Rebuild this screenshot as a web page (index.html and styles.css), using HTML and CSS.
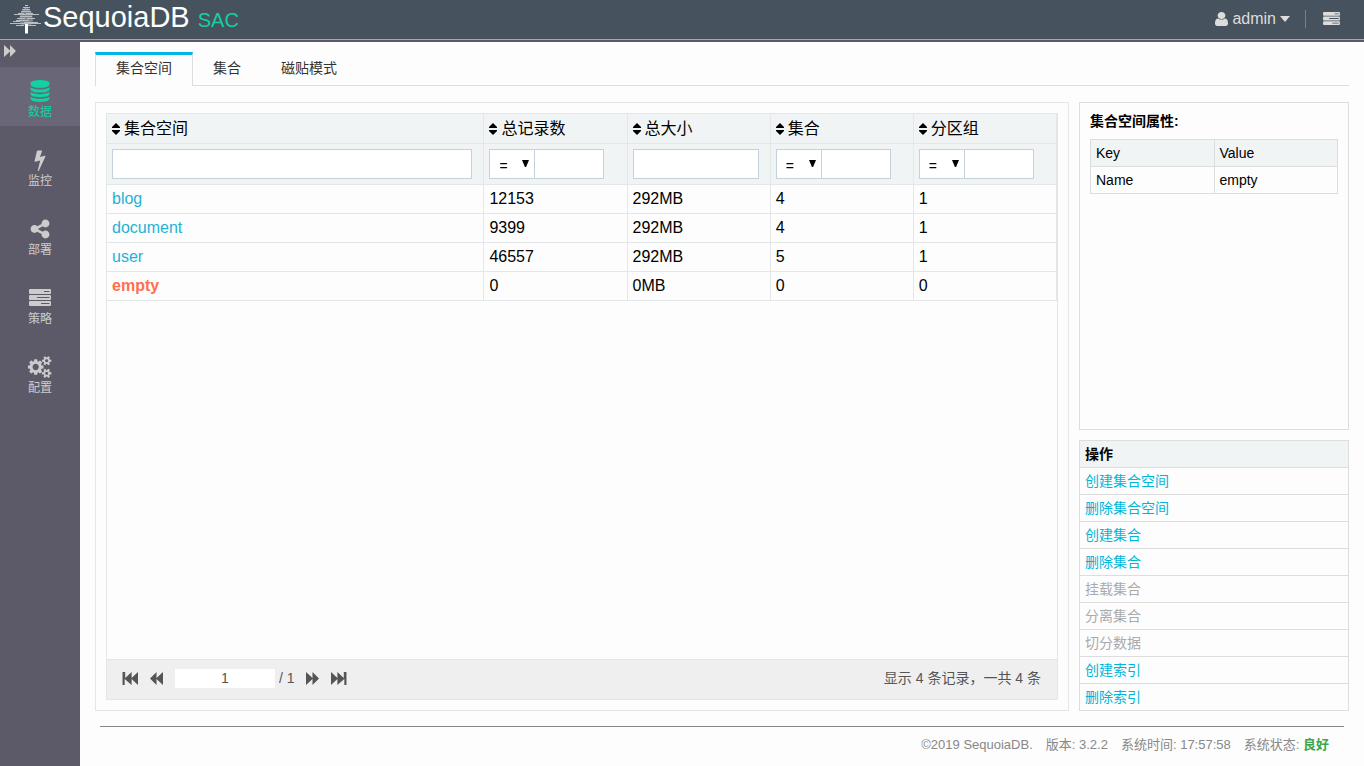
FILE: index.html
```html
<!DOCTYPE html>
<html lang="zh-CN">
<head>
<meta charset="utf-8">
<title>SequoiaDB SAC</title>
<link rel="stylesheet" href="styles.css">
</head>
<body>
<svg class="sprite" aria-hidden="true">
  <symbol id="i-forward" viewBox="0 0 12 12"><path d="M0 0L6 5.500V0L12 6L6 12V6.500L0 12z"/></symbol>
  <symbol id="i-end" viewBox="0 0 15 12"><path d="M0 0L6 5.500V0L12 5.500V0H14.500V12H12.500V6.500L6 12V6.500L0 12z"/></symbol>
  <symbol id="i-sort" viewBox="0 0 8 12"><path d="M4 0L8 4V5H0V4zM0 7H8V8L4 12L0 8z"/></symbol>
  <symbol id="i-tasks" viewBox="0 0 22 17"><path fill-rule="evenodd" d="M1 0H21Q22 0 22 1V4Q22 5 21 5H1Q0 5 0 4V1Q0 0 1 0zM15 2V3H20.500V2zM1 6H21Q22 6 22 7V10Q22 11 21 11H1Q0 11 0 10V7Q0 6 1 6zM8 8V9H20.500V8zM1 12H21Q22 12 22 13V16Q22 17 21 17H1Q0 17 0 16V13Q0 12 1 12zM12 14V15H20.500V14z"/></symbol>
</svg>

<header class="topbar">
  <div class="brand">
    <svg class="brand-tree" viewBox="0 0 32 30" aria-hidden="true">
      <path class="brand-core" d="M16 2L22 9L23 17L21 21H11L9 15L11 8z"/>
      <path d="M15 1.500h3M13 3.500h7M12 5.500h8M11 7.500h10M8 9.500h6M16 9.500h7M4 10.500h25M10 12.500h12M7 14.500h8M17 14.500h8M6 16.500h13M3 17.500h7M14 18.500h14M0 19.500h31M6 21.500h8M18 21.500h8"/>
      <path class="brand-trunk" d="M15 20h3v9.500h-3z"/>
    </svg>
    <span class="brand-name">SequoiaDB</span>
    <span class="brand-sub">SAC</span>
  </div>
  <div class="account">
    <button class="user-menu" type="button">
      <svg class="user-icon" viewBox="256 128 1280 1536" preserveAspectRatio="none" aria-hidden="true"><path d="M1536 1399q0 109-62.500 187t-150.500 78h-854q-88 0-150.500-78t-62.500-187q0-85 8.500-160.500t31.500-152 58.500-131 94-89 134.500-34.500q131 128 313 128t313-128q76 0 134.500 34.500t94 89 58.500 131 31.500 152 8.500 160.500zm-256-887q0 159-112.500 271.500t-271.500 112.500-271.500-112.500-112.500-271.500 112.500-271.500 271.500-112.500 271.500 112.500 112.500 271.500z"/></svg>
      <span>admin</span>
      <svg class="caret" viewBox="0 0 10 6" aria-hidden="true"><path d="M0 0H10L5 6z"/></svg>
    </button>
    <span class="divider"></span>
    <button class="task-button" type="button" aria-label="任务"><svg viewBox="0 0 22 17"><use href="#i-tasks"/></svg></button>
  </div>
</header>

<div class="shell">
  <nav class="sidebar">
    <button class="sidebar-toggle" type="button" aria-label="展开"><svg viewBox="0 0 12 12" aria-hidden="true"><use href="#i-forward"/></svg></button>
    <a class="nav-item nav-item--active" href="#">
      <svg class="nav-icon" viewBox="0 0 1536 1792" aria-hidden="true"><path d="M768 768q237 0 443-43t325-127v170q0 69-103 128t-280 93.500-385 34.500-385-34.500-280-93.500-103-128v-170q119 84 325 127t443 43zm0 768q237 0 443-43t325-127v170q0 69-103 128t-280 93.500-385 34.500-385-34.500-280-93.500-103-128v-170q119 84 325 127t443 43zm0-384q237 0 443-43t325-127v170q0 69-103 128t-280 93.500-385 34.500-385-34.500-280-93.500-103-128v-170q119 84 325 127t443 43zm0-1152q208 0 385 34.500t280 93.500 103 128v128q0 69-103 128t-280 93.500-385 34.500-385-34.500-280-93.500-103-128v-128q0-69 103-128t280-93.500 385-34.500z"/></svg>
      <span>数据</span>
    </a>
    <a class="nav-item" href="#">
      <svg class="nav-icon" viewBox="0 0 1792 1792" aria-hidden="true"><path d="M1333 566q18 20 7 44l-540 1157q-13 25-42 25-4 0-14-2-17-5-25.500-19t-4.500-30l197-808-406 101q-4 1-12 1-18 0-31-11-18-15-13-39l201-825q4-14 16-23t28-9h328q19 0 32 12.500t13 29.500q0 8-5 18l-171 463 396-98q8-2 12-2 19 0 34 15z"/></svg>
      <span>监控</span>
    </a>
    <a class="nav-item" href="#">
      <svg class="nav-icon" viewBox="128 0 1536 1792" aria-hidden="true"><path d="M1344 1024q133 0 226.500 93.500t93.500 226.500-93.500 226.500-226.500 93.500-226.500-93.500-93.500-226.500q0-12 2-34l-360-180q-92 86-218 86-133 0-226.500-93.500t-93.500-226.500 93.500-226.500 226.500-93.500q126 0 218 86l360-180q-2-22-2-34 0-133 93.500-226.500t226.500-93.500 226.500 93.500 93.500 226.500-93.500 226.500-226.500 93.500q-126 0-218-86l-360 180q2 22 2 34t-2 34l360 180q92-86 218-86z"/></svg>
      <span>部署</span>
    </a>
    <a class="nav-item" href="#">
      <svg class="nav-icon" viewBox="-1 -2 24 22" aria-hidden="true"><use href="#i-tasks" width="22" height="17"/></svg>
      <span>策略</span>
    </a>
    <a class="nav-item" href="#">
      <svg class="nav-icon" viewBox="0 0 1856 1792" aria-hidden="true"><path d="M832 896q0-106-75-181t-181-75-181 75-75 181 75 181 181 75 181-75 75-181zm768 512q0-52-38-90t-90-38-90 38-38 90q0 53 37.500 90.500t90.500 37.500 90.500-37.500 37.500-90.500zm0-1024q0-52-38-90t-90-38-90 38-38 90q0 53 37.500 90.500t90.500 37.500 90.500-37.500 37.500-90.500zm-384 421v185q0 10-7 19.500t-16 10.500l-155 24q-11 35-32 76 34 48 90 115 7 11 7 20 0 12-7 19-23 30-82.500 89.500t-78.500 59.500q-11 0-21-7l-115-90q-37 19-77 31-11 108-23 155-7 24-30 24h-186q-11 0-20-7.500t-10-17.500l-23-153q-34-10-75-31l-118 89q-7 7-20 7-11 0-21-8-144-133-144-160 0-9 7-19 10-14 41-53t47-61q-23-44-35-82l-152-24q-10-1-17-9.500t-7-19.500v-185q0-10 7-19.500t16-10.500l155-24q11-35 32-76-34-48-90-115-7-11-7-20 0-12 7-20 22-30 82-89t79-59q11 0 21 7l115 90q34-18 77-32 11-108 23-154 7-24 30-24h186q11 0 20 7.500t10 17.500l23 153q34 10 75 31l118-89q8-7 20-7 11 0 21 8 144 133 144 160 0 8-7 19-12 16-42 54t-45 60q23 48 34 82l152 23q10 2 17 10.500t7 19.500zm640 533v140q0 16-149 31-12 27-30 52 51 113 51 138 0 4-4 7-122 71-124 71-8 0-46-47t-52-68q-20 2-30 2t-30-2q-14 21-52 68t-46 47q-2 0-124-71-4-3-4-7 0-25 51-138-18-25-30-52-149-15-149-31v-140q0-16 149-31 13-29 30-52-51-113-51-138 0-4 4-7 4-2 35-20t59-34 30-16q8 0 46 46.500t52 67.500q20-2 30-2t30 2q51-71 92-112l6-2q4 0 124 70 4 3 4 7 0 25-51 138 17 23 30 52 149 15 149 31zm0-1024v140q0 16-149 31-12 27-30 52 51 113 51 138 0 4-4 7-122 71-124 71-8 0-46-47t-52-68q-20 2-30 2t-30-2q-14 21-52 68t-46 47q-2 0-124-71-4-3-4-7 0-25 51-138-18-25-30-52-149-15-149-31v-140q0-16 149-31 13-29 30-52-51-113-51-138 0-4 4-7 4-2 35-20t59-34 30-16q8 0 46 46.500t52 67.500q20-2 30-2t30 2q51-71 92-112l6-2q4 0 124 70 4 3 4 7 0 25-51 138 17 23 30 52 149 15 149 31z"/></svg>
      <span>配置</span>
    </a>
  </nav>

  <div class="page">
    <div class="tabs" role="tablist">
      <button class="tab tab--active" type="button" role="tab" aria-selected="true">集合空间</button>
      <button class="tab" type="button" role="tab">集合</button>
      <button class="tab" type="button" role="tab">磁贴模式</button>
    </div>

    <main class="content">
      <section class="panel panel--grid">
        <div class="grid">
          <table class="spaces">
            <colgroup><col><col class="col-stat"><col class="col-stat"><col class="col-stat"><col class="col-stat"></colgroup>
            <thead>
              <tr>
                <th><svg class="sort" viewBox="0 0 8 12"><use href="#i-sort"/></svg>集合空间</th>
                <th><svg class="sort" viewBox="0 0 8 12"><use href="#i-sort"/></svg>总记录数</th>
                <th><svg class="sort" viewBox="0 0 8 12"><use href="#i-sort"/></svg>总大小</th>
                <th><svg class="sort" viewBox="0 0 8 12"><use href="#i-sort"/></svg>集合</th>
                <th><svg class="sort" viewBox="0 0 8 12"><use href="#i-sort"/></svg>分区组</th>
              </tr>
              <tr class="filters">
                <td><input class="field" type="text" aria-label="集合空间"></td>
                <td><div class="compare"><span class="operator"><select aria-label="总记录数条件"><option>=</option></select><svg class="drop" viewBox="0 0 6 6"><path d="M0 0H6L3.500 6H2.500z"/></svg></span><input class="field" type="text" aria-label="总记录数"></div></td>
                <td><input class="field" type="text" aria-label="总大小"></td>
                <td><div class="compare"><span class="operator"><select aria-label="集合条件"><option>=</option></select><svg class="drop" viewBox="0 0 6 6"><path d="M0 0H6L3.500 6H2.500z"/></svg></span><input class="field" type="text" aria-label="集合"></div></td>
                <td><div class="compare"><span class="operator"><select aria-label="分区组条件"><option>=</option></select><svg class="drop" viewBox="0 0 6 6"><path d="M0 0H6L3.500 6H2.500z"/></svg></span><input class="field" type="text" aria-label="分区组"></div></td>
              </tr>
            </thead>
            <tbody>
              <tr><td><a href="#">blog</a></td><td>12153</td><td>292MB</td><td>4</td><td>1</td></tr>
              <tr><td><a href="#">document</a></td><td>9399</td><td>292MB</td><td>4</td><td>1</td></tr>
              <tr><td><a href="#">user</a></td><td>46557</td><td>292MB</td><td>5</td><td>1</td></tr>
              <tr><td><a class="selected" href="#">empty</a></td><td>0</td><td>0MB</td><td>0</td><td>0</td></tr>
            </tbody>
          </table>
          <div class="pager">
            <button type="button" aria-label="首页"><svg class="flip icon-end" viewBox="0 0 15 12"><use href="#i-end"/></svg></button>
            <button type="button" aria-label="上一页"><svg class="flip icon-step" viewBox="0 0 12 12"><use href="#i-forward"/></svg></button>
            <span class="pager-page"><input type="text" value="1" aria-label="页码"> / 1</span>
            <button type="button" aria-label="下一页"><svg class="icon-step" viewBox="0 0 12 12"><use href="#i-forward"/></svg></button>
            <button type="button" aria-label="末页"><svg class="icon-end" viewBox="0 0 15 12"><use href="#i-end"/></svg></button>
            <span class="pager-total">显示 4 条记录，一共 4 条</span>
          </div>
        </div>
      </section>

      <aside class="side">
        <section class="panel panel--props">
          <h2 class="props-title">集合空间属性:</h2>
          <table class="props">
            <thead><tr><th>Key</th><th>Value</th></tr></thead>
            <tbody><tr><td>Name</td><td>empty</td></tr></tbody>
          </table>
        </section>
        <section class="panel actions">
          <h2 class="actions-title">操作</h2>
          <ul class="action-list">
            <li><a href="#">创建集合空间</a></li>
            <li><a href="#">删除集合空间</a></li>
            <li><a href="#">创建集合</a></li>
            <li><a href="#">删除集合</a></li>
            <li><a class="disabled">挂载集合</a></li>
            <li><a class="disabled">分离集合</a></li>
            <li><a class="disabled">切分数据</a></li>
            <li><a href="#">创建索引</a></li>
            <li><a href="#">删除索引</a></li>
          </ul>
        </section>
      </aside>
    </main>

    <footer class="footer">
      <span>©2019 SequoiaDB.</span>
      <span>版本: 3.2.2</span>
      <span>系统时间: 17:57:58</span>
      <span>系统状态: <b class="ok">良好</b></span>
    </footer>
  </div>
</div>
</body>
</html>
```

FILE: styles.css
```css
* { box-sizing: border-box; }

body {
  margin: 0;
  min-height: 100vh;
  display: flex;
  flex-direction: column;
  background: #fdfdfd;
  color: #000;
  font: 14px/20px "Liberation Sans", Arial, "Noto Sans CJK SC", sans-serif;
}

svg { display: block; fill: currentColor; }
a { color: #00b5d8; text-decoration: none; }
button, input, select { font: inherit; color: inherit; }
button { padding: 0; border: 0; background: none; cursor: pointer; }

.sprite { display: none; }

/* Top bar */
.topbar {
  display: flex;
  justify-content: space-between;
  height: 42px;
  padding: 0 24px 0 10px;
  background: #46525d;
  border-bottom: 2px solid #5c5a69;
  box-shadow: inset 0 -1px #a6a6b0;
}
.brand { display: flex; align-items: baseline; color: #fff; }
.brand-tree {
  align-self: flex-start;
  width: 32px;
  height: 30px;
  margin: 4px 1px 0 0;
  fill: none;
  stroke: #b9bdc0;
}
.brand-core { fill: #7d868e; stroke: none; }
.brand-trunk { fill: #fff; stroke: none; }
.brand-name { font-size: 29px; line-height: 34px; }
.brand-sub { margin-left: 8px; font-size: 20px; color: #17cf9f; }
.account {
  display: flex;
  align-items: center;
  height: 37px;
  color: #ddd;
}
.user-menu { display: flex; align-items: center; gap: 4px; font-size: 16px; }
.user-icon { width: 13px; height: 14px; }
.caret { width: 10px; height: 6px; }
.divider { width: 1px; height: 18px; margin: 0 17px 0 15px; background: #77808a; }
.task-button svg { width: 17px; height: 13px; }

/* Sidebar */
.shell { flex: 1; display: flex; }
.sidebar {
  flex: none;
  width: 80px;
  background: #5c5a69;
  color: #ccc;
}
.sidebar-toggle {
  display: block;
  width: 100%;
  height: 25px;
  padding: 0 4px 8px;
}
.sidebar-toggle svg { width: 12px; height: 12px; }
.nav-item {
  display: flex;
  flex-direction: column;
  align-items: center;
  height: 59px;
  margin-bottom: 10px;
  padding-top: 13px;
  font-size: 12px;
  line-height: 20px;
  color: #ccc;
}
.nav-item--active { background: #696777; color: #0fd3a2; }
.nav-icon { width: 24px; height: 22px; }

/* Page */
.page {
  flex: 1;
  min-width: 0;
  display: flex;
  flex-direction: column;
  padding: 10px 15px 0;
}
.tabs { display: flex; height: 34px; border-bottom: 1px solid #ddd; }
.tab { height: 34px; padding: 0 20px 2px; color: #333; }
.tab--active {
  padding-bottom: 5px;
  border: 1px solid #ddd;
  border-top: 3px solid #00b5e2;
  border-bottom: 0;
  background: #fdfdfd;
}
.content { flex: 1; display: flex; gap: 10px; margin-top: 16px; }
.panel { border: 1px solid #ddd; }
.panel--grid { flex: 1; min-width: 0; display: flex; padding: 10px; border-color: #e3e7e8; }

/* Data grid */
.grid {
  flex: 1;
  display: flex;
  flex-direction: column;
  border: 1px solid #e3e7e8;
}
.spaces {
  width: 100%;
  table-layout: fixed;
  border-collapse: separate;
  border-spacing: 0;
  font-size: 16px;
}
.col-stat { width: 15.07%; }
.spaces th, .spaces td {
  height: 29px;
  padding: 0 5px;
  border: 0 solid #e3e7e8;
  border-width: 0 1px 1px 0;
  text-align: left;
  font-weight: normal;
}
.spaces thead { background: #f0f4f5; }
.spaces th { height: 30px; }
.spaces .filters td { height: 41px; padding: 5px 11px 5px 5px; }
.spaces a { color: #1fb2d6; }
.spaces .selected { color: #ff6f4a; font-weight: bold; }
.sort {
  display: inline-block;
  width: 8px;
  height: 12px;
  margin-right: 4px;
  vertical-align: -1px;
}
.field {
  display: block;
  width: 100%;
  height: 30px;
  padding: 0 5px;
  border: 1px solid #c5d0dd;
  background: #fff;
}
.compare { display: flex; width: 115px; }
.compare .field { flex: 1; min-width: 0; border-left: 0; }
.operator { position: relative; flex: none; width: 46px; }
.operator select {
  display: block;
  width: 100%;
  height: 30px;
  padding: 3px 0 0 9px;
  border: 1px solid #c5d0dd;
  border-radius: 0;
  appearance: none;
  background: #fff;
  font-size: 14px;
}
.drop {
  position: absolute;
  top: 11px;
  right: 6px;
  width: 7px;
  height: 7px;
  pointer-events: none;
}

/* Pager */
.pager {
  display: flex;
  align-items: center;
  gap: 12px;
  height: 40px;
  margin-top: auto;
  padding: 0 16px 3px 15px;
  border-top: 1px solid #e3e7e8;
  background: #efefef;
  color: #555;
}
.pager input {
  width: 100px;
  height: 19px;
  padding: 0;
  border: 0;
  background: #fff;
  text-align: center;
}
.flip { transform: scaleX(-1); }
.icon-end { width: 16px; height: 13px; }
.icon-step { width: 13px; height: 13px; }
.pager-total { margin-left: auto; }

/* Side column */
.side { flex: none; width: 270px; display: flex; flex-direction: column; gap: 10px; }
.panel--props { flex: 1; padding: 8px 10px; }
.props-title, .actions-title { margin: 0; font-size: 14px; line-height: 20px; }
.props { width: 100%; margin-top: 8px; border-collapse: collapse; table-layout: fixed; }
.props th, .props td {
  height: 27px;
  padding: 0 5px;
  border: 1px solid #ddd;
  text-align: left;
  font-weight: normal;
}
.props th { background: #f0f4f5; }
.actions-title { padding: 3px 5px; background: #f0f4f5; }
.action-list { margin: 0; padding: 0; list-style: none; }
.action-list li { height: 27px; padding: 3px 5px; border-top: 1px solid #ddd; }
.disabled { color: #aaa; }

/* Footer */
.footer {
  display: flex;
  justify-content: flex-end;
  gap: 13px;
  height: 40px;
  margin: 15px 5px 0;
  padding: 8px 15px 0 0;
  border-top: 1px solid #888;
  font-size: 13px;
  color: #888;
}
.ok { color: #3ba64a; }
```
